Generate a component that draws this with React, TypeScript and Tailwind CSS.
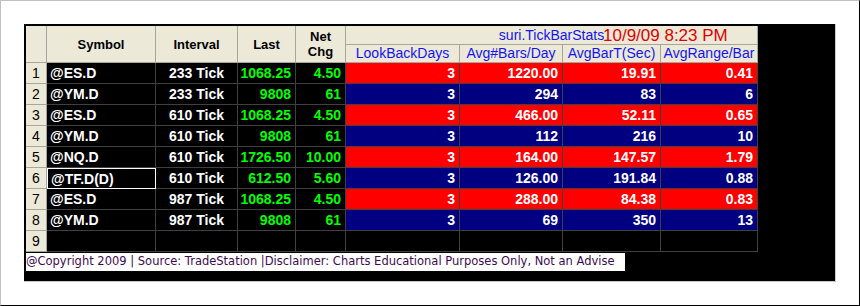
import React from "react";

type Row = {
  sym: string;
  interval: string;
  last: string;
  chg: string;
  days: string;
  bars: string;
  barT: string;
  range: string;
  red: boolean;
};

const rows: Row[] = [
  { sym: "@ES.D", interval: "233 Tick", last: "1068.25", chg: "4.50", days: "3", bars: "1220.00", barT: "19.91", range: "0.41", red: true },
  { sym: "@YM.D", interval: "233 Tick", last: "9808", chg: "61", days: "3", bars: "294", barT: "83", range: "6", red: false },
  { sym: "@ES.D", interval: "610 Tick", last: "1068.25", chg: "4.50", days: "3", bars: "466.00", barT: "52.11", range: "0.65", red: true },
  { sym: "@YM.D", interval: "610 Tick", last: "9808", chg: "61", days: "3", bars: "112", barT: "216", range: "10", red: false },
  { sym: "@NQ.D", interval: "610 Tick", last: "1726.50", chg: "10.00", days: "3", bars: "164.00", barT: "147.57", range: "1.79", red: true },
  { sym: "@TF.D(D)", interval: "610 Tick", last: "612.50", chg: "5.60", days: "3", bars: "126.00", barT: "191.84", range: "0.88", red: false },
  { sym: "@ES.D", interval: "987 Tick", last: "1068.25", chg: "4.50", days: "3", bars: "288.00", barT: "84.38", range: "0.83", red: true },
  { sym: "@YM.D", interval: "987 Tick", last: "9808", chg: "61", days: "3", bars: "69", barT: "350", range: "13", red: false },
];

const cols = "grid grid-cols-[21px_109px_82px_58px_50px_114px_103px_98px_97px]";
const cell = "h-[21px] border-r border-b border-[#404040] flex items-center text-[14px] font-bold leading-none";
const head = "bg-[#ece9d8] border-r border-b border-[#a7a69a] flex items-center justify-center";

function DataRow({ r, n }: { r?: Row; n: number }) {
  const fill = r ? (r.red ? "bg-[#ff0000]" : "bg-[#000080]") : "bg-black";
  return (
    <div className={cols}>
      <div className={`${head} h-[21px] text-[14px] text-black`}>{n}</div>
      <div
        className={`${cell} bg-black text-white pl-[3px] ${n === 6 ? "border border-white" : ""}`}
      >
        {r?.sym}
      </div>
      <div className={`${cell} bg-black text-white justify-center`}>{r?.interval}</div>
      <div className={`${cell} bg-black text-[#00ff00] justify-end pr-[4px]`}>{r?.last}</div>
      <div className={`${cell} bg-black text-[#00ff00] justify-end pr-[4px]`}>{r?.chg}</div>
      <div className={`${cell} ${fill} text-white justify-end pr-[4px]`}>{r?.days}</div>
      <div className={`${cell} ${fill} text-white justify-end pr-[4px]`}>{r?.bars}</div>
      <div className={`${cell} ${fill} text-white justify-end pr-[4px]`}>{r?.barT}</div>
      <div className={`${cell} ${fill} text-white justify-end pr-[4px]`}>{r?.range}</div>
    </div>
  );
}

export default function App() {
  return (
    <div className="w-[860px] h-[306px] bg-white border-l border-t border-[#c0c0c0] border-r border-b border-r-black border-b-black pt-[23px] pl-[23px] font-['Liberation_Sans',Arial,sans-serif]">
      <div className="w-[812px] h-[258px] bg-black border-r border-b border-[#c8c8c8] pt-[2px] pl-[2px]">
        {/* header */}
        <div className={`${cols} grid-rows-[19px_18px] text-[13px] font-bold text-black leading-[15px]`}>
          <div className={`${head} row-span-2`}></div>
          <div className={`${head} row-span-2`}>Symbol</div>
          <div className={`${head} row-span-2`}>Interval</div>
          <div className={`${head} row-span-2`}>Last</div>
          <div className={`${head} row-span-2 flex-col text-center`}>
            <span>Net</span>
            <span>Chg</span>
          </div>
          <div className={`${head} col-span-4 relative font-normal text-[14px] text-[#1414f0]`}>
            <span>suri.TickBarStats</span>
            <span className="absolute left-[257px] top-[1px] text-[17px] leading-[18px] text-[#e00000]">
              10/9/09 8:23 PM
            </span>
          </div>
          <div className={`${head} font-normal text-[14px] text-[#1414f0]`}>LookBackDays</div>
          <div className={`${head} font-normal text-[14px] text-[#1414f0]`}>Avg#Bars/Day</div>
          <div className={`${head} font-normal text-[14px] text-[#1414f0]`}>AvgBarT(Sec)</div>
          <div className={`${head} font-normal text-[14px] text-[#1414f0]`}>AvgRange/Bar</div>
        </div>

        {rows.map((r, i) => (
          <DataRow key={i} r={r} n={i + 1} />
        ))}
        <DataRow n={9} />

        {/* footer */}
        <div className="w-[599px] h-[18px] mt-[1px] bg-white flex items-center text-[11.5px] text-[#3d0b4f] font-['DejaVu_Sans',Verdana,sans-serif] whitespace-nowrap">
          @Copyright 2009 | Source: TradeStation |Disclaimer: Charts Educational Purposes Only, Not an Advise
        </div>
      </div>
    </div>
  );
}
